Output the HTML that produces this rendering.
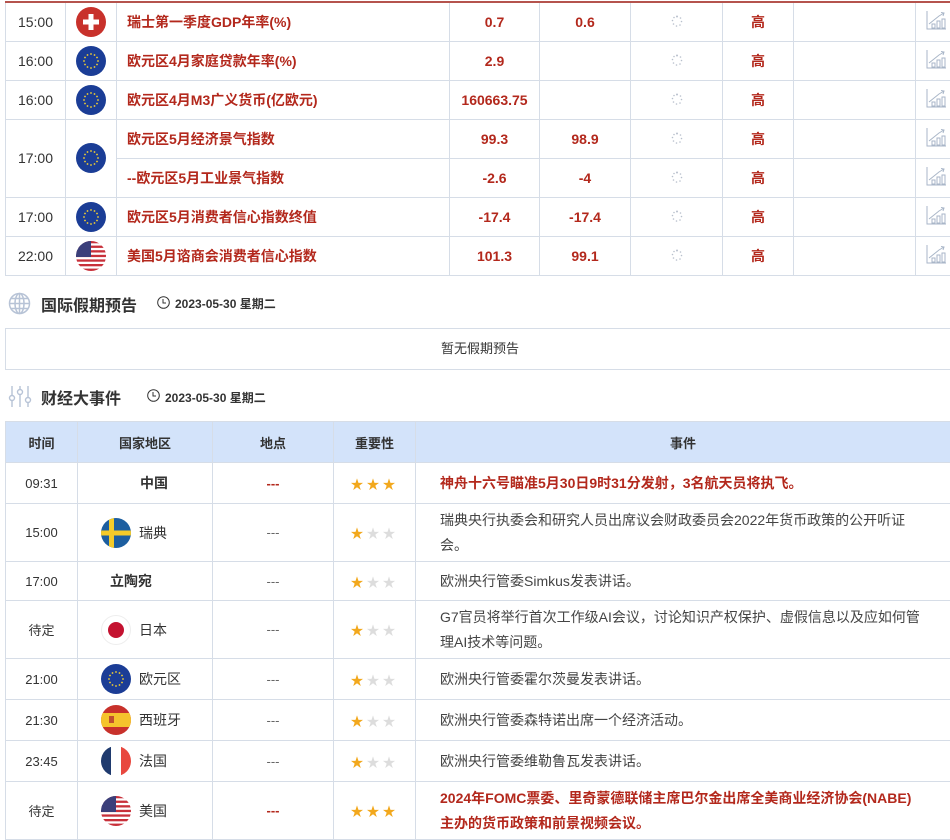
<!DOCTYPE html>
<html><head><meta charset="utf-8">
<style>
*{margin:0;padding:0;box-sizing:border-box}
body{width:950px;height:837px;overflow:hidden;background:#fff;position:relative;font-family:"Liberation Sans","Noto Sans CJK SC",sans-serif;color:#333}
table{border-collapse:collapse;table-layout:fixed;position:absolute}
td,th{border:1px solid #d6dde7;font-size:14px;text-align:center;vertical-align:middle;padding:0}
.t1{left:5px;top:1px;width:975px;border-top:2px solid #b5534d}
.t1 td{height:39px}
.r{color:#b3281c;font-weight:bold}
.ind{text-align:left;padding-left:10px;font-size:14px}
.flag{display:inline-block;vertical-align:middle}
.h{position:absolute;font-size:16px;font-weight:bold;color:#333}
.d{position:absolute;font-size:12px;font-weight:bold;color:#333}
.box{position:absolute;left:5px;top:328px;width:960px;height:42px;border:1px solid #d6dde7;font-size:13px;text-align:center;line-height:40px;padding-right:10px}
.t2{left:5px;top:421px;width:945px}
.t2 th{background:#d3e3fa;height:41px;font-size:13px;font-weight:bold;color:#333}
.t2 td{font-size:13px}
.ev{text-align:left!important;padding:0 26px 0 24px!important;line-height:25px;color:#444;font-size:14px!important}
.evr{color:#b3281c;font-weight:bold}
.c{text-align:left!important;padding-left:23px!important;font-size:14px!important}
.c span{vertical-align:middle;margin-left:8px;color:#333}
.st{color:#f2a81d;font-size:15px;letter-spacing:3px}
.st i{font-style:normal;color:#ddd}
.dash{color:#666}
</style></head><body>
<svg width="0" height="0" style="position:absolute">
<defs>
<g id="eu"><circle cx="15" cy="15" r="15" fill="#1b3d96"/><g fill="#f5d130"><circle cx="15" cy="8" r=".9"/><circle cx="18.5" cy="9" r=".9"/><circle cx="21" cy="11.5" r=".9"/><circle cx="22" cy="15" r=".9"/><circle cx="21" cy="18.5" r=".9"/><circle cx="18.5" cy="21" r=".9"/><circle cx="15" cy="22" r=".9"/><circle cx="11.5" cy="21" r=".9"/><circle cx="9" cy="18.5" r=".9"/><circle cx="8" cy="15" r=".9"/><circle cx="9" cy="11.5" r=".9"/><circle cx="11.5" cy="9" r=".9"/></g></g>
<clipPath id="cc"><circle cx="15" cy="15" r="15"/></clipPath>
<g id="us"><g clip-path="url(#cc)"><rect width="30" height="30" fill="#fff"/><g fill="#c8303a"><rect y="0" width="30" height="2.3"/><rect y="4.6" width="30" height="2.3"/><rect y="9.2" width="30" height="2.3"/><rect y="13.8" width="30" height="2.3"/><rect y="18.4" width="30" height="2.3"/><rect y="23" width="30" height="2.3"/><rect y="27.6" width="30" height="2.4"/></g><rect width="15" height="16" fill="#3b3f7a"/></g></g>
<g id="spin" fill="#b8c0cc"><circle cx="6" cy="1.5" r="1"/><circle cx="9.5" cy="3" r=".8"/><circle cx="10.5" cy="6.5" r=".8"/><circle cx="9" cy="10" r=".8"/><circle cx="5.5" cy="11" r=".8"/><circle cx="2.5" cy="9" r=".8"/><circle cx="1.5" cy="5.5" r=".8"/><circle cx="3" cy="2.5" r=".8"/></g>
<g id="chart" fill="none" stroke="#a9b6c8" stroke-width="1"><path d="M1 2V20H20"/><path d="M3 15L13 7L18 4M15 3.5L18 4L17 7"/><rect x="6" y="15" width="3" height="4"/><rect x="11" y="12" width="3" height="7"/><rect x="16" y="10" width="3" height="9"/></g>
</defs></svg>

<table class="t1">
<colgroup><col style="width:60px"><col style="width:51px"><col style="width:333px"><col style="width:90px"><col style="width:91px"><col style="width:92px"><col style="width:71px"><col style="width:122px"><col style="width:65px"></colgroup>
<tr><td>15:00</td><td><svg class="flag" width="30" height="30"><circle cx="15" cy="15" r="15" fill="#c8312b"/><rect x="12.5" y="7" width="5" height="16" fill="#fff"/><rect x="7" y="12.5" width="16" height="5" fill="#fff"/></svg></td><td class="r ind">瑞士第一季度GDP年率(%)</td><td class="r">0.7</td><td class="r">0.6</td><td><svg width="12" height="12"><use href="#spin"/></svg></td><td class="r">高</td><td></td><td style="text-align:left;padding-left:10px"><svg width="22" height="22"><use href="#chart"/></svg></td></tr>
<tr><td>16:00</td><td><svg class="flag" width="30" height="30"><use href="#eu"/></svg></td><td class="r ind">欧元区4月家庭贷款年率(%)</td><td class="r">2.9</td><td class="r"></td><td><svg width="12" height="12"><use href="#spin"/></svg></td><td class="r">高</td><td></td><td style="text-align:left;padding-left:10px"><svg width="22" height="22"><use href="#chart"/></svg></td></tr>
<tr><td>16:00</td><td><svg class="flag" width="30" height="30"><use href="#eu"/></svg></td><td class="r ind">欧元区4月M3广义货币(亿欧元)</td><td class="r">160663.75</td><td class="r"></td><td><svg width="12" height="12"><use href="#spin"/></svg></td><td class="r">高</td><td></td><td style="text-align:left;padding-left:10px"><svg width="22" height="22"><use href="#chart"/></svg></td></tr>
<tr><td rowspan="2">17:00</td><td rowspan="2"><svg class="flag" width="30" height="30"><use href="#eu"/></svg></td><td class="r ind">欧元区5月经济景气指数</td><td class="r">99.3</td><td class="r">98.9</td><td><svg width="12" height="12"><use href="#spin"/></svg></td><td class="r">高</td><td></td><td style="text-align:left;padding-left:10px"><svg width="22" height="22"><use href="#chart"/></svg></td></tr>
<tr><td class="r ind">--欧元区5月工业景气指数</td><td class="r">-2.6</td><td class="r">-4</td><td><svg width="12" height="12"><use href="#spin"/></svg></td><td class="r">高</td><td></td><td style="text-align:left;padding-left:10px"><svg width="22" height="22"><use href="#chart"/></svg></td></tr>
<tr><td>17:00</td><td><svg class="flag" width="30" height="30"><use href="#eu"/></svg></td><td class="r ind">欧元区5月消费者信心指数终值</td><td class="r">-17.4</td><td class="r">-17.4</td><td><svg width="12" height="12"><use href="#spin"/></svg></td><td class="r">高</td><td></td><td style="text-align:left;padding-left:10px"><svg width="22" height="22"><use href="#chart"/></svg></td></tr>
<tr><td>22:00</td><td><svg class="flag" width="30" height="30"><use href="#us"/></svg></td><td class="r ind">美国5月谘商会消费者信心指数</td><td class="r">101.3</td><td class="r">99.1</td><td><svg width="12" height="12"><use href="#spin"/></svg></td><td class="r">高</td><td></td><td style="text-align:left;padding-left:10px"><svg width="22" height="22"><use href="#chart"/></svg></td></tr>
</table>

<svg style="position:absolute;left:8px;top:292px" width="23" height="23" fill="none" stroke="#b7c3d6" stroke-width="1.5"><circle cx="11.5" cy="11.5" r="10"/><ellipse cx="11.5" cy="11.5" rx="4.5" ry="10"/><path d="M1.5 11.5H21.5M3 6.5H20M3 16.5H20M11.5 1.5V21.5"/></svg>
<div class="h" style="left:41px;top:292px">国际假期预告</div>
<svg style="position:absolute;left:157px;top:296px" width="13" height="13" fill="none" stroke="#333" stroke-width="1"><circle cx="6.5" cy="6.5" r="5.8"/><path d="M6 3V7H9"/></svg>
<div class="d" style="left:175px;top:295px">2023-05-30 星期二</div>
<div class="box">暂无假期预告</div>

<svg style="position:absolute;left:8px;top:384px" width="24" height="24" fill="none" stroke="#b7c3d6" stroke-width="1.4"><path d="M4 2V11M4 17V23M12 2V5M12 11V23M20 2V13M20 19V23"/><circle cx="4" cy="14" r="2.5"/><circle cx="12" cy="8" r="2.5"/><circle cx="20" cy="16" r="2.5"/></svg>
<div class="h" style="left:41px;top:385px">财经大事件</div>
<svg style="position:absolute;left:147px;top:389px" width="13" height="13" fill="none" stroke="#333" stroke-width="1"><circle cx="6.5" cy="6.5" r="5.8"/><path d="M6 3V7H9"/></svg>
<div class="d" style="left:165px;top:389px">2023-05-30 星期二</div>

<table class="t2">
<colgroup><col style="width:72px"><col style="width:135px"><col style="width:121px"><col style="width:82px"><col style="width:535px"></colgroup>
<tr><th>时间</th><th>国家地区</th><th>地点</th><th>重要性</th><th>事件</th></tr>
<tr style="height:41px"><td>09:31</td><td class="c" style="padding-left:62px!important"><b style="font-weight:bold">中国</b></td><td class="r">---</td><td class="st">★★★</td><td class="ev evr">神舟十六号瞄准5月30日9时31分发射，3名航天员将执飞。</td></tr>
<tr style="height:58px"><td>15:00</td><td class="c"><svg class="flag" width="30" height="30"><g clip-path="url(#cc)"><rect width="30" height="30" fill="#1d5fa0"/><rect x="8" width="5" height="30" fill="#f4cb2a"/><rect y="12.5" width="30" height="5" fill="#f4cb2a"/></g></svg><span>瑞典</span></td><td class="dash">---</td><td class="st">★<i>★★</i></td><td class="ev">瑞典央行执委会和研究人员出席议会财政委员会2022年货币政策的公开听证会。</td></tr>
<tr style="height:39px"><td>17:00</td><td class="c" style="padding-left:32px!important"><b>立陶宛</b></td><td class="dash">---</td><td class="st">★<i>★★</i></td><td class="ev">欧洲央行管委Simkus发表讲话。</td></tr>
<tr style="height:58px"><td>待定</td><td class="c"><svg class="flag" width="30" height="30"><circle cx="15" cy="15" r="14.5" fill="#fff" stroke="#eee"/><circle cx="15" cy="15" r="8" fill="#c41230"/></svg><span>日本</span></td><td class="dash">---</td><td class="st">★<i>★★</i></td><td class="ev">G7官员将举行首次工作级AI会议，讨论知识产权保护、虚假信息以及应如何管理AI技术等问题。</td></tr>
<tr style="height:41px"><td>21:00</td><td class="c"><svg class="flag" width="30" height="30"><use href="#eu"/></svg><span>欧元区</span></td><td class="dash">---</td><td class="st">★<i>★★</i></td><td class="ev">欧洲央行管委霍尔茨曼发表讲话。</td></tr>
<tr style="height:41px"><td>21:30</td><td class="c"><svg class="flag" width="30" height="30"><g clip-path="url(#cc)"><rect width="30" height="30" fill="#c8312b"/><rect y="8" width="30" height="14" fill="#f5c42c"/><rect x="8" y="11" width="5" height="7" fill="#c0502e"/></g></svg><span>西班牙</span></td><td class="dash">---</td><td class="st">★<i>★★</i></td><td class="ev">欧洲央行管委森特诺出席一个经济活动。</td></tr>
<tr style="height:41px"><td>23:45</td><td class="c"><svg class="flag" width="30" height="30"><g clip-path="url(#cc)"><rect width="10" height="30" fill="#1f3a6e"/><rect x="10" width="10" height="30" fill="#fff"/><rect x="20" width="10" height="30" fill="#e8483f"/></g></svg><span>法国</span></td><td class="dash">---</td><td class="st">★<i>★★</i></td><td class="ev">欧洲央行管委维勒鲁瓦发表讲话。</td></tr>
<tr style="height:58px"><td>待定</td><td class="c"><svg class="flag" width="30" height="30"><use href="#us"/></svg><span>美国</span></td><td class="r">---</td><td class="st">★★★</td><td class="ev evr">2024年FOMC票委、里奇蒙德联储主席巴尔金出席全美商业经济协会(NABE)主办的货币政策和前景视频会议。</td></tr>
</table>
</body></html>
